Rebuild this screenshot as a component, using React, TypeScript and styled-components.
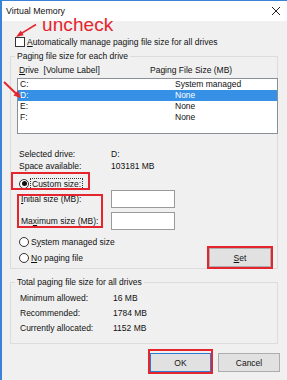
import styled, { createGlobalStyle } from 'styled-components';

const GlobalStyle = createGlobalStyle`
  html, body {
    margin: 0;
    padding: 0;
    background: #f0f0f0;
  }
  body {
    font-family: "Liberation Sans", Arial, sans-serif;
    font-size: 8.5px;
    color: #111;
  }
`;

const RED = '#e4252d';

const Window = styled.div`
  position: relative;
  width: 287px;
  height: 380px;
  box-sizing: border-box;
  border-left: 2px solid #3a84d8;
  border-top: 1px solid #3a84d8;
  background: #f0f0f0;
  overflow: hidden;
`;

const TitleBar = styled.div`
  height: 20px;
  background: #fff;
  display: flex;
  align-items: center;
  justify-content: space-between;
  padding: 0 6px 0 4px;
`;

const Title = styled.span`
  font-size: 8.8px;
  color: #111;
`;

const Body = styled.div`
  display: flex;
  flex-direction: column;
  padding: 0 7px 0 8px;
`;

const CheckRow = styled.label`
  display: flex;
  align-items: center;
  gap: 2px;
  height: 11px;
  margin: 15px 0 0 5px;
`;

const CheckBox = styled.span`
  width: 10px;
  height: 10px;
  box-sizing: border-box;
  border: 1px solid #333;
  background: #fff;
`;

const Key = styled.span`
  text-decoration: underline;
  text-underline-offset: 1px;
`;

const Group = styled.fieldset<{ $mt: number }>`
  width: 268px;
  box-sizing: border-box;
  margin: ${({ $mt }) => $mt}px 0 0;
  padding: 0;
  border: 1px solid #dcdcdc;
  min-width: 0;
`;

const Legend = styled.legend`
  margin-left: 4px;
  padding: 0 2px;
  line-height: 11px;
  height: 11px;
`;

const ColHeader = styled.div`
  display: grid;
  grid-template-columns: 131px auto;
  height: 11px;
  line-height: 11px;
  margin-top: 3px;
  padding-left: 8px;
  white-space: pre;
`;

const ListBox = styled.div`
  height: 56px;
  box-sizing: border-box;
  margin: 2px -1px 0 6px;
  border: 1px solid #8a8f98;
  background: #fff;
`;

const ListRow = styled.div<{ $selected?: boolean }>`
  display: grid;
  grid-template-columns: 155px auto;
  height: 11px;
  line-height: 11px;
  padding-left: 2px;
  background: ${({ $selected }) => ($selected ? '#3590e6' : 'transparent')};
  color: ${({ $selected }) => ($selected ? '#fff' : '#111')};
`;

const InfoGrid = styled.div<{ $mt: number; $pl: number; $col: number; $row: number; $pb?: number }>`
  display: grid;
  grid-template-columns: ${({ $col }) => $col}px auto;
  grid-auto-rows: ${({ $row }) => $row}px;
  align-items: center;
  margin-top: ${({ $mt }) => $mt}px;
  padding-left: ${({ $pl }) => $pl}px;
  padding-bottom: ${({ $pb = 0 }) => $pb}px;
`;

const Mark = styled.div<{ $t: number; $l: number; $r: number; $b: number }>`
  position: relative;
  &::after {
    content: '';
    position: absolute;
    top: ${({ $t }) => $t}px;
    left: ${({ $l }) => $l}px;
    right: ${({ $r }) => $r}px;
    bottom: ${({ $b }) => $b}px;
    border: 2px solid ${RED};
    pointer-events: none;
  }
`;

const RadioRow = styled.label`
  display: flex;
  align-items: center;
  gap: 2px;
  height: 11px;
`;

const Radio = styled.span<{ $checked?: boolean }>`
  width: 10px;
  height: 10px;
  box-sizing: border-box;
  border: 1px solid #333;
  border-radius: 50%;
  background: #fff;
  display: flex;
  align-items: center;
  justify-content: center;
  &::after {
    content: '';
    width: 5px;
    height: 5px;
    border-radius: 50%;
    background: ${({ $checked }) => ($checked ? '#111' : 'transparent')};
  }
`;

const Focused = styled.span`
  outline: 1px dotted #333;
  outline-offset: 0;
  padding: 0 1px;
  line-height: 10px;
`;

const CustomWrap = styled.div`
  display: flex;
  margin-top: 6px;
  padding-left: 8px;
`;

const SizeArea = styled.div`
  display: flex;
  margin-top: 1px;
  padding-left: 10px;
`;

const Stack = styled.div<{ $w: number }>`
  display: flex;
  flex-direction: column;
  gap: 4px;
  width: ${({ $w }) => $w}px;
`;

const FieldLabel = styled.div`
  height: 18px;
  line-height: 18px;
`;

const Input = styled.div`
  height: 18px;
  box-sizing: border-box;
  border: 1px solid #9a9a9a;
  background: #fff;
`;

const BottomRow = styled.div`
  display: flex;
  justify-content: space-between;
  align-items: flex-end;
  margin-top: 6px;
  padding: 0 6px 1px 8px;
`;

const RadioStack = styled.div`
  display: flex;
  flex-direction: column;
  gap: 5px;
  padding-bottom: 4px;
`;

const Button = styled.div<{ $default?: boolean; $w: number }>`
  width: ${({ $w }) => $w}px;
  height: 19px;
  box-sizing: border-box;
  display: flex;
  align-items: center;
  justify-content: center;
  background: #e1e1e1;
  border: 1px solid ${({ $default }) => ($default ? '#2b7bd3' : '#adadad')};
`;

const ButtonBar = styled.div`
  display: flex;
  justify-content: flex-end;
  align-items: center;
  gap: 7px;
  margin-top: 9px;
`;

const Note = styled.div`
  position: absolute;
  left: 40px;
  top: 14px;
  font-size: 19px;
  line-height: 1;
  color: ${RED};
  letter-spacing: 0.1px;
`;

const Overlay = styled.svg`
  position: absolute;
  left: -2px;
  top: -1px;
  pointer-events: none;
`;

export default function App() {
  return (
    <>
      <GlobalStyle />
      <Window>
        <TitleBar>
          <Title>Virtual Memory</Title>
          <svg width="10" height="10" viewBox="0 0 10 10">
            <path d="M1 1 L9 9 M9 1 L1 9" stroke="#222" strokeWidth="1" />
          </svg>
        </TitleBar>
        <Body>
          <CheckRow>
            <CheckBox />
            <span>
              <Key>A</Key>utomatically manage paging file size for all drives
            </span>
          </CheckRow>

          <Group $mt={4}>
            <Legend>Paging file size for each drive</Legend>
            <ColHeader>
              <span>
                <Key>D</Key>rive  [Volume Label]
              </span>
              <span>Paging File Size (MB)</span>
            </ColHeader>
            <ListBox>
              <ListRow>
                <span>C:</span>
                <span>System managed</span>
              </ListRow>
              <ListRow $selected>
                <span>D:</span>
                <span>None</span>
              </ListRow>
              <ListRow>
                <span>E:</span>
                <span>None</span>
              </ListRow>
              <ListRow>
                <span>F:</span>
                <span>None</span>
              </ListRow>
            </ListBox>

            <InfoGrid $mt={14} $pl={8} $col={92} $row={12}>
              <span>Selected drive:</span>
              <span>D:</span>
              <span>Space available:</span>
              <span>103181 MB</span>
            </InfoGrid>

            <CustomWrap>
              <Mark $t={-6} $l={-8} $r={-8} $b={-1}>
                <RadioRow>
                  <Radio $checked />
                  <Focused>
                    <Key>C</Key>ustom size:
                  </Focused>
                </RadioRow>
              </Mark>
            </CustomWrap>

            <SizeArea>
              <Mark $t={4} $l={-4} $r={8} $b={2}>
                <Stack $w={90}>
                  <FieldLabel>
                    <Key>I</Key>nitial size (MB):
                  </FieldLabel>
                  <FieldLabel>
                    Ma<Key>x</Key>imum size (MB):
                  </FieldLabel>
                </Stack>
              </Mark>
              <Stack $w={64}>
                <Input />
                <Input />
              </Stack>
            </SizeArea>

            <BottomRow>
              <RadioStack>
                <RadioRow>
                  <Radio />
                  <span>
                    S<Key>y</Key>stem managed size
                  </span>
                </RadioRow>
                <RadioRow>
                  <Radio />
                  <span>
                    <Key>N</Key>o paging file
                  </span>
                </RadioRow>
              </RadioStack>
              <Mark $t={-2} $l={-2} $r={-2} $b={-2}>
                <Button $w={62}>
                  <span>
                    <Key>S</Key>et
                  </span>
                </Button>
              </Mark>
            </BottomRow>
          </Group>

          <Group $mt={8}>
            <Legend>Total paging file size for all drives</Legend>
            <InfoGrid $mt={2} $pl={9} $col={93} $row={15} $pb={8}>
              <span>Minimum allowed:</span>
              <span>16 MB</span>
              <span>Recommended:</span>
              <span>1784 MB</span>
              <span>Currently allocated:</span>
              <span>1152 MB</span>
            </InfoGrid>
          </Group>

          <ButtonBar>
            <Mark $t={-4} $l={-2} $r={-2} $b={-2}>
              <Button $default $w={61}>
                OK
              </Button>
            </Mark>
            <Button $w={62}>Cancel</Button>
          </ButtonBar>
        </Body>

        <Note>uncheck</Note>
        <Overlay width="287" height="380" viewBox="0 0 287 380">
          <line x1="36" y1="24.5" x2="21" y2="33.6" stroke={RED} strokeWidth="1.6" />
          <polygon points="16,37 23.6,35.2 20.8,30.6" fill={RED} />
          <line x1="4" y1="82" x2="16" y2="93.5" stroke={RED} strokeWidth="2" />
          <polygon points="21,98 13.4,95.6 17.8,90.8" fill={RED} />
        </Overlay>
      </Window>
    </>
  );
}
